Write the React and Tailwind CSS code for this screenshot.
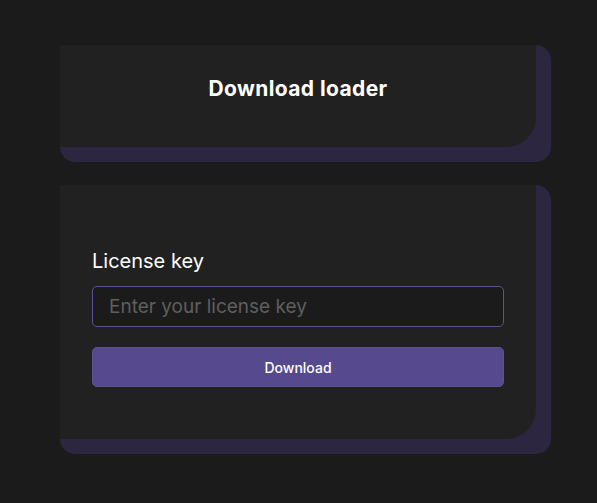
import React, { useState } from 'react';

const Card = ({ children, className }) => (
  <div className="bg-[#2c2640] rounded-[15px] rounded-tl-none pr-[15px] pb-[15px]">
    <div className={`bg-[#212121] rounded-br-[30px] ${className}`}>{children}</div>
  </div>
);

const App = () => {
  const [key, setKey] = useState('');

  return (
    <div className="min-h-screen w-full bg-[#1b1b1b] pt-[45px] pl-[60px] pr-[46px] font-['Inter','Liberation_Sans',sans-serif]">
      <div className="flex flex-col gap-[23px] w-[491px]">
        {/* Header card */}
        <Card className="h-[102px] pb-[14px] flex items-center justify-center">
          <h1 className="text-[21px] font-bold text-white tracking-[0.4px]">Download loader</h1>
        </Card>

        {/* License form */}
        <Card className="pt-[62px] pb-[52px] px-[32px]">
          <label className="block text-[20px] leading-[28px] text-white mb-[11px]">License key</label>
          <input
            type="text"
            value={key}
            onChange={(e) => setKey(e.target.value)}
            placeholder="Enter your license key"
            className="w-full h-[41px] bg-[#1b1b1b] border border-[#5e5390] rounded-[5px] px-[16px] text-[19px] text-white placeholder:text-[#5f5f5f] focus:outline-none"
          />
          <button
            type="button"
            className="mt-[20px] w-full h-[40px] bg-[#56498d] border border-[#5e5390] rounded-[5px] text-[14px] font-medium text-white"
          >
            Download
          </button>
        </Card>
      </div>
    </div>
  );
};

export default App;
